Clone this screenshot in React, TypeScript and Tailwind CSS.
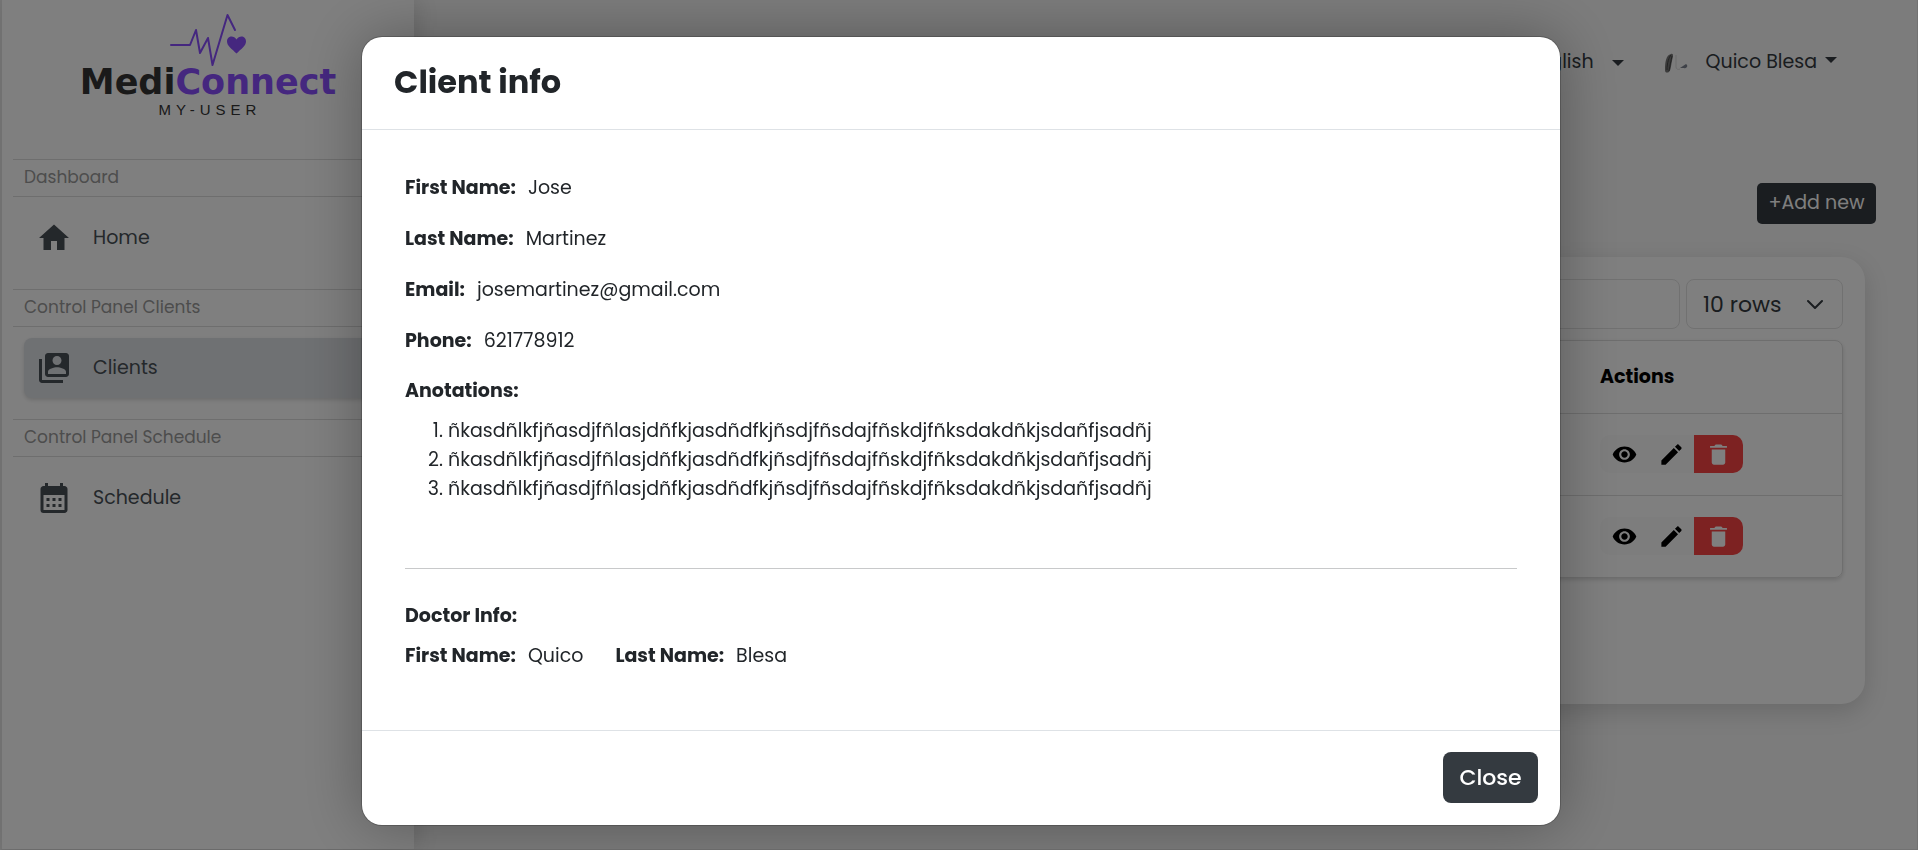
import type { ReactNode } from "react";
import { IoMdCreate, IoMdEye, IoMdTrash } from "react-icons/io";
import { MdCalendarMonth, MdHome, MdSwitchAccount } from "react-icons/md";

const annotations = [
  "ñkasdñlkfjñasdjfñlasjdñfkjasdñdfkjñsdjfñsdajfñskdjfñksdakdñkjsdañfjsadñj",
  "ñkasdñlkfjñasdjfñlasjdñfkjasdñdfkjñsdjfñsdajfñskdjfñksdakdñkjsdañfjsadñj",
  "ñkasdñlkfjñasdjfñlasjdñfkjasdñdfkjñsdjfñsdajfñskdjfñksdakdñkjsdañfjsadñj",
];

function Logo() {
  return (
    <div className="flex h-[159px] w-full flex-col items-center pt-3 pr-[11px]">
      <svg viewBox="0 0 78 56" className="h-14 w-[78px]" aria-hidden="true">
        <path
          d="M2 33H21L27 18L31 41L39 26L43.500 53L58.500 3L66 18"
          fill="none"
          stroke="#8a4fff"
          strokeWidth="2"
          strokeLinecap="round"
          strokeLinejoin="round"
        />
        <path
          d="M67.500 41.500C63 37 58 34 58 29.500C58 23.500 65 23 67.500 27.500C70 23 77 23.500 77 29.500C77 34 72 37 67.500 41.500Z"
          fill="#8a4fff"
        />
      </svg>
      <div className="font-['DejaVu_Sans'] text-[35px] leading-7 font-bold text-[#343434]">
        Medi<span className="text-[#8a4fff]">Connect</span>
      </div>
      <div className="mt-1 pl-1 font-['Liberation_Sans'] text-[15px] leading-5 tracking-[5px] text-[#343434]">
        MY-USER
      </div>
    </div>
  );
}

function NavSection({
  title,
  icon,
  label,
  active = false,
}: {
  title: string;
  icon: ReactNode;
  label: string;
  active?: boolean;
}) {
  return (
    <section className="h-[130px]">
      <h2 className="flex h-[38px] items-center border-y border-[#dcdcdc] pl-[11px] text-[17px] text-[#9a9a9a]">
        {title}
      </h2>
      <a
        href="#"
        className={
          active
            ? "mt-[11px] mr-3 ml-[11px] flex h-[60px] items-center gap-[14px] rounded-lg bg-[#dfe2e6] px-3 text-[19px] text-[#495057] shadow-[0_2px_4px_rgba(0,0,0,0.15)]"
            : "mt-[11px] mr-3 ml-[11px] flex h-[60px] items-center gap-[14px] rounded-lg px-3 text-[19px] text-[#495057]"
        }
      >
        <span className="flex w-[43px] text-[36px] text-[#495057]">{icon}</span>
        {label}
      </a>
    </section>
  );
}

function Caret() {
  return (
    <svg viewBox="0 0 12 6" className="h-1.5 w-3" aria-hidden="true">
      <path d="M0 0H12L6 6Z" fill="#343a40" />
    </svg>
  );
}

function Avatar() {
  return (
    <svg viewBox="0 0 24 20" className="h-5 w-6" aria-hidden="true">
      <path d="M1 17C1 9 2 2 7 1C10 0 9 4 8 8C7 12 7 17 5 19C3 20 1 20 1 17Z" fill="#777777" />
      <path d="M3 17C3 10 5 4 7 2M5 18C6 12 7 8 8 3" fill="none" stroke="#454545" strokeWidth="1" />
      <path d="M12 2V14C12 16 14 17 16 16" fill="none" stroke="#d8d8d8" strokeWidth="1" />
      <path d="M16 15L22 11C25 13 22 16 20 15Z" fill="#7d8390" />
    </svg>
  );
}

function ActionButtons() {
  return (
    <div className="flex h-[38px] w-[143px] overflow-hidden rounded-[10px] bg-[#fafafa] text-[27px] text-black">
      <button aria-label="View" className="flex w-12 items-center justify-center">
        <IoMdEye />
      </button>
      <button aria-label="Edit" className="flex w-[46px] items-center justify-center">
        <IoMdCreate />
      </button>
      <button
        aria-label="Delete"
        className="flex flex-1 items-center justify-center bg-[#fb4444] text-white"
      >
        <IoMdTrash />
      </button>
    </div>
  );
}

function Field({ label, value }: { label: string; value: string }) {
  return (
    <div className="flex gap-3">
      <dt className="font-bold">{label}</dt>
      <dd>{value}</dd>
    </div>
  );
}

function ClientsPage() {
  return (
    <div className="flex min-h-screen border-r border-b border-l-2 border-r-[#e4e4e4] border-b-[#e4e4e4] border-l-[#ececec] bg-[#f8f8f8]">
      <aside className="z-10 w-[412px] shrink-0 bg-white pl-[11px] shadow-[4px_0_20px_rgba(0,0,0,0.12)]">
        <Logo />
        <nav>
          <NavSection title="Dashboard" icon={<MdHome />} label="Home" />
          <NavSection title="Control Panel Clients" icon={<MdSwitchAccount />} label="Clients" active />
          <NavSection title="Control Panel Schedule" icon={<MdCalendarMonth />} label="Schedule" />
        </nav>
      </aside>
      <main className="flex min-w-0 flex-1 flex-col text-[#343a40]">
        <header className="flex h-[125px] items-center justify-end pr-20 text-[19px]">
          <button className="flex items-center gap-[18px]">
            English
            <Caret />
          </button>
          <button className="ml-10 flex items-center">
            <Avatar />
            <span className="ml-[18px]">Quico Blesa</span>
            <span className="mb-1.5 ml-2 flex">
              <Caret />
            </span>
          </button>
        </header>
        <div className="mt-[58px] flex justify-end pr-[41px]">
          <button className="h-[41px] w-[119px] rounded-[5px] bg-[#343a40] text-[19px] text-white">
            +Add new
          </button>
        </div>
        <section className="mx-[52px] mt-[33px] h-[447px] rounded-3xl bg-white p-[22px] shadow-[0_8px_24px_rgba(0,0,0,0.15)]">
          <div className="flex gap-1.5">
            <input
              aria-label="Search clients"
              className="h-[50px] min-w-0 flex-1 rounded-lg border border-[#e2e2e2] px-4"
            />
            <div className="grid w-[157px] grid-cols-1 items-center">
              <select
                aria-label="Rows per page"
                className="col-start-1 row-start-1 h-[50px] w-full appearance-none rounded-lg border border-[#e2e2e2] pl-4 text-[22px]"
              >
                <option>10 rows</option>
              </select>
              <svg
                viewBox="0 0 16 16"
                className="pointer-events-none col-start-1 row-start-1 mr-5 h-4 w-4 justify-self-end"
                aria-hidden="true"
              >
                <path
                  d="M1 5L8 12L15 5"
                  fill="none"
                  stroke="#343a40"
                  strokeWidth="2"
                  strokeLinecap="round"
                  strokeLinejoin="round"
                />
              </svg>
            </div>
          </div>
          <div className="mt-[11px] overflow-hidden rounded-lg border border-[#dcdcdc] shadow-[0_2px_4px_rgba(0,0,0,0.15)]">
            <table aria-label="Clients" className="w-full table-fixed text-left text-[19px]">
              <thead>
                <tr className="h-[72px] border-b border-[#dcdcdc]">
                  <td />
                  <th scope="col" className="w-[242px] font-bold text-black">
                    Actions
                  </th>
                </tr>
              </thead>
              <tbody>
                <tr className="h-[82px] border-b border-[#dcdcdc]">
                  <td />
                  <td>
                    <ActionButtons />
                  </td>
                </tr>
                <tr className="h-[82px]">
                  <td />
                  <td>
                    <ActionButtons />
                  </td>
                </tr>
              </tbody>
            </table>
          </div>
        </section>
      </main>
    </div>
  );
}

function ClientDialog() {
  return (
    <div className="fixed inset-0 z-20 overflow-hidden bg-black/50 py-9 pr-4 pl-5">
      <div
        role="dialog"
        aria-modal="true"
        aria-labelledby="client-dialog-title"
        className="mx-auto max-w-[1200px] rounded-[21px] border border-black/20 bg-white bg-clip-padding text-[19px] leading-[29px] text-[#212529] shadow-[0_0_60px_rgba(0,0,0,0.3)]"
      >
        <header className="h-[93px] border-b border-[#dee2e6] px-8 pt-[21px]">
          <h1 id="client-dialog-title" className="text-[32px] leading-12 font-bold">
            Client info
          </h1>
        </header>
        <div className="px-[43px] pt-[43px] pb-[60px]">
          <dl className="flex flex-col gap-[22px]">
            <Field label="First Name:" value="Jose" />
            <Field label="Last Name:" value="Martinez" />
            <Field label="Email:" value="josemartinez@gmail.com" />
            <Field label="Phone:" value="621778912" />
          </dl>
          <h2 className="mt-[21px] font-bold">Anotations:</h2>
          <ol className="mt-[11px] list-decimal pl-[43px]">
            {annotations.map((text, index) => (
              <li key={index}>{text}</li>
            ))}
          </ol>
          <hr className="mt-[65px] border-[#c8c9ca]" />
          <h2 className="mt-8 font-bold">Doctor Info:</h2>
          <dl className="mt-[11px] flex gap-8">
            <Field label="First Name:" value="Quico" />
            <Field label="Last Name:" value="Blesa" />
          </dl>
        </div>
        <footer className="flex justify-end border-t border-[#dee2e6] px-[22px] pt-[21px] pb-[22px]">
          <button className="h-[51px] w-[95px] rounded-lg bg-[#343a40] text-[22px] font-medium text-white">
            Close
          </button>
        </footer>
      </div>
    </div>
  );
}

export default function App() {
  return (
    <div className="font-[Poppins,Inter,sans-serif]">
      <ClientsPage />
      <ClientDialog />
    </div>
  );
}
